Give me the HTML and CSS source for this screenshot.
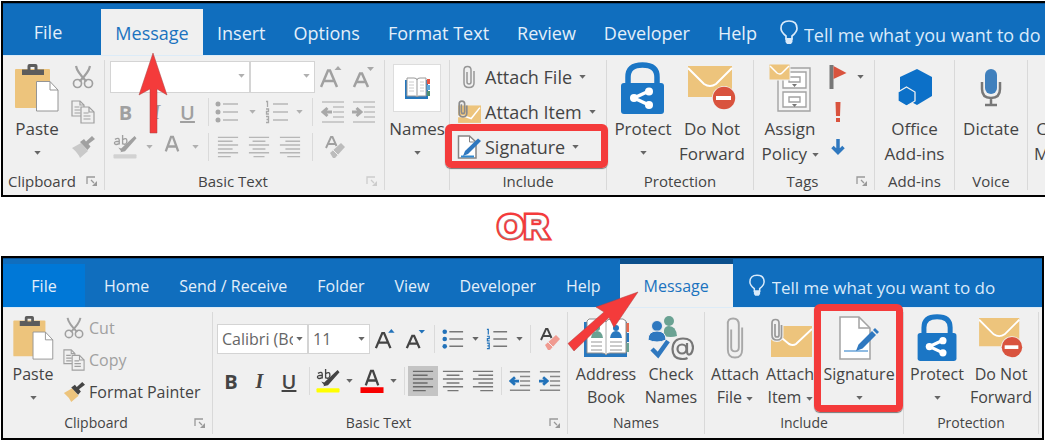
FILE: index.html
```html
<!DOCTYPE html>
<html lang="en">
<head>
<meta charset="utf-8">
<title>Outlook signature ribbons</title>
<link rel="stylesheet" href="styles.css">
</head>
<body>
<svg class="sprite" aria-hidden="true">
  <symbol id="caret" viewBox="0 0 8 5"><path d="M0 0h8L4 4.6z" fill="currentColor"/></symbol>
  <symbol id="launcher" viewBox="0 0 12 11"><path d="M1 8V1h8M5 4l3 3" fill="none" stroke="currentColor" stroke-width="1.3"/><path d="M11 5v5H6z" fill="currentColor"/></symbol>
  <symbol id="paste" viewBox="0 0 44 48">
    <rect y="5" width="35" height="39" rx="1" fill="#edc47c"/>
    <path d="M7 5.500h5.500V2q0-2 2-2h6q2 0 2 2v3.500H29V11H7zM15.500 3v3h4V3z" fill="#5c5c5c" fill-rule="evenodd"/>
    <path d="M21.500 17.500H35l8 8.500v21H21.500z" fill="#fff" stroke="#949494"/><path d="M35 17.500V26h8" fill="none" stroke="#949494"/>
  </symbol>
  <symbol id="cut" viewBox="0 0 22 24"><g fill="none" stroke="currentColor" stroke-width="1.700"><path d="M4 1q1 6 10.500 15.500M18 1q-1 6-10.500 15.500" stroke-width="2.200"/><circle cx="5.500" cy="18.500" r="4"/><circle cx="16.500" cy="18.500" r="4"/></g></symbol>
  <symbol id="copy" viewBox="0 0 24 24"><g fill="#f0f0f0" stroke="currentColor" stroke-width="1.200"><path d="M1 1h8l4 4v11H1z"/><path d="M9 1v4h4M3.500 7h5M3.500 10h6M3.500 13h6" fill="none"/><path d="M10 7h8l5 5v11H10z"/><path d="M18 7v5h5M12.500 13h5M12.500 16h7M12.500 19h7" fill="none"/></g></symbol>
  <symbol id="brush" viewBox="0 0 24 22"><path d="M1 12l9-5 7 8-8 7q-2-5-8-10z" fill="var(--brush)"/><path d="M9 6l4-3 2 2.500L21 0l3 3-6.500 5 2 2.500-3 3.500z" fill="currentColor"/></symbol>
  <symbol id="grow" viewBox="0 0 22 22"><path d="M1 21L8 4.500h2L17 21M4 15h10.500" fill="none" stroke="currentColor" stroke-width="2.500"/><path d="M14.500 4L18 0l3.500 4z" fill="var(--accent)"/></symbol>
  <symbol id="shrink" viewBox="0 0 22 22"><path d="M2 21L8 7.500h2L16 21M4.500 16h9" fill="none" stroke="currentColor" stroke-width="2.500"/><path d="M15 1h7l-3.500 4z" fill="var(--accent)"/></symbol>
  <symbol id="bullets" viewBox="0 0 24 22"><g fill="var(--accent)"><circle cx="3" cy="3" r="2.500"/><circle cx="3" cy="11" r="2.500"/><circle cx="3" cy="19" r="2.500"/></g><path d="M8 3h15M8 11h15M8 19h15" stroke="currentColor" stroke-width="1.600" opacity=".7"/></symbol>
  <symbol id="numbers" viewBox="0 0 24 24"><path d="M1 1.500h1.500V7M1 9h2.500v2.500H1.500V14H4M1 16.500h2.500v6H1M1.500 19.500h2" fill="none" stroke="var(--accent)" stroke-width="1.300"/><path d="M8 4h15M8 12h15M8 20h15" stroke="currentColor" stroke-width="1.600" opacity=".7"/></symbol>
  <symbol id="outdent" viewBox="0 0 24 24"><path d="M1 2h22M12 7h11M12 12h11M12 17h11M1 22h22" stroke="currentColor" stroke-width="1.600" opacity=".6"/><path d="M11 12H3M6.500 8L2 12l4.500 4" fill="none" stroke="var(--accent)" stroke-width="3"/></symbol>
  <symbol id="indent" viewBox="0 0 24 24"><path d="M1 2h22M12 7h11M12 12h11M12 17h11M1 22h22" stroke="currentColor" stroke-width="1.600" opacity=".6"/><path d="M0 12h8M4.500 8L9 12l-4.500 4" fill="none" stroke="var(--accent)" stroke-width="3"/></symbol>
  <symbol id="left" viewBox="0 0 22 24"><path d="M0 1.500h22M0 5.700h16M0 9.900h22M0 14.100h16M0 18.300h22M0 22.500h14" stroke="currentColor" stroke-width="1.600" opacity=".7"/></symbol>
  <symbol id="center" viewBox="0 0 22 24"><path d="M0 1.500h22M4 5.700h14M0 9.900h22M4 14.100h14M0 18.300h22M5 22.500h12" stroke="currentColor" stroke-width="1.600" opacity=".7"/></symbol>
  <symbol id="right" viewBox="0 0 22 24"><path d="M0 1.500h22M6 5.700h16M0 9.900h22M6 14.100h16M0 18.300h22M8 22.500h14" stroke="currentColor" stroke-width="1.600" opacity=".7"/></symbol>
  <symbol id="highlight" viewBox="0 0 24 25"><path d="M1.500 4.500Q6 2 6 5.500V10M6 6.500Q1 6.500 1 8.500 1.500 11 6 9M9.500 0v10M9.500 5Q14 2 14 6.500 13.500 11 9.500 9" fill="none" stroke="currentColor" stroke-width="1.400"/><path d="M22 1l2 2.500L12 17l-5 1 1-1-3-4 3 1z" fill="currentColor"/><rect y="20" width="24" height="4.500" rx="1" fill="var(--marker)"/></symbol>
  <symbol id="fontcolor" viewBox="0 0 24 25"><path d="M5.500 17L11 2h2l5.500 15M8 12h8" fill="none" stroke="currentColor" stroke-width="2.400"/><rect y="19" width="24" height="6" fill="var(--ink)"/></symbol>
  <symbol id="clear" viewBox="0 0 20 22"><path d="M1 12L6 1h1.500l4 9M3 8h7" fill="none" stroke="currentColor" stroke-width="1.900"/><path d="M5 17L16 7l4 4-10 11H8z" fill="var(--eraser)"/><path d="M8 14l5 5" stroke="#f0f0f0"/></symbol>
  <symbol id="book" viewBox="0 0 46 40">
    <path d="M1 4h43v35H1z" fill="#2878bf"/><path d="M43 5h3v9h-3z" fill="#e86a50"/><path d="M43 15h3v9h-3z" fill="#2878bf"/><path d="M43 25h3v9h-3z" fill="#6aa293"/>
    <path d="M4 3l2-2h12q4 0 5 3 1-3 5-3h12l3 2v32H27q-3 0-4 2-1-2-4-2H4z" fill="#fff" stroke="#8d8d8d"/><path d="M23 4v33" stroke="#aaa"/>
    <path d="M8 24h11M8 28h11M8 32h11M27 24h12M27 28h12M27 32h12" stroke="#bbb" stroke-width="1.300"/>
    <circle cx="14" cy="10" r="3" fill="#6aa293"/><path d="M8 20q1-7 6-7t6 7z" fill="#6aa293"/><circle cx="33" cy="10" r="3" fill="#2878bf"/><path d="M27 20q1-7 6-7t6 7z" fill="#2878bf"/>
  </symbol>
  <symbol id="smallbook" viewBox="0 0 26 23">
    <path d="M1 3h23v19H1z" fill="#2477bd"/><path d="M23 2h3v5h-3z" fill="#e65542"/><path d="M23 8h3v5h-3z" fill="#5da8da"/><path d="M23 14h3v5h-3z" fill="#4f8f73"/>
    <path d="M3 1h7q3 0 3 2 0-2 3-2h6v18h-7q-2 0-2 1 0-1-2-1H3z" fill="#fff" stroke="#999"/><path d="M13 3v17" stroke="#999"/><path d="M5 5h5M5 8h5M5 11h5M5 14h5M16 5h4M16 8h4M16 11h4M16 14h4" stroke="#ccc"/>
  </symbol>
  <symbol id="clip" viewBox="0 0 18 44"><path d="M5 13v19q0 4 4 4t4-4V8q0-6.500-6-6.500T1.500 8v26q0 8.500 7.500 8.500t7.500-8.500V11" fill="none" stroke="#a8a8a8" stroke-width="2"/></symbol>
  <symbol id="smallclip" viewBox="0 0 12 24"><path d="M4 7v10q0 2 2 2t2-2V5q0-3.500-3.500-3.500T1 5v13q0 4.500 5 4.500t5-4.500V6" fill="none" stroke="#969696" stroke-width="1.500"/></symbol>
  <symbol id="item" viewBox="0 0 44 40"><path d="M3 8h41v31H3z" fill="#edc47c"/><path d="M3 11l18 15q4 2 7 0l16-15" fill="none" stroke="#fff" stroke-width="2"/><path d="M7 6v11q0 2 2 2t2-2V5q0-3.500-3.500-3.500T4 5v12q0 5 5 5t4.500-5V7" fill="none" stroke="#f0f0f0" stroke-width="4"/><path d="M7 6v11q0 2 2 2t2-2V5q0-3.500-3.500-3.500T4 5v12q0 5 5 5t4.500-5V7" fill="none" stroke="#999" stroke-width="1.700"/></symbol>
  <symbol id="smallitem" viewBox="0 0 22 22"><path d="M1 5h21v16H1z" fill="#edc47c"/><path d="M1 15l6 0 6 2 8-10" fill="none" stroke="#fff" stroke-width="1.400"/><path d="M4 4v7q0 1.500 1.500 1.500T7 11V3.500Q7 1 4.500 1T2 3.500V12q0 3.500 3.500 3.500T9 12V5" fill="none" stroke="#8b8b8b" stroke-width="1.500"/></symbol>
  <symbol id="sign" viewBox="0 0 40 44"><path d="M1 1h19l11 11v31H1z" fill="#fff" stroke="#a3a3a3" stroke-width="1.500"/><path d="M20 1v11h11" fill="none" stroke="#a3a3a3" stroke-width="1.500"/><path d="M5 35h24" stroke="#6aa5d8" stroke-width="1.500"/><path d="M17 35l2.500-6.500L33 15l4 4-13.500 13.500zM34 14l2-2 4 4-2 2z" fill="#2f78bf"/></symbol>
  <symbol id="smallsign" viewBox="0 0 24 24"><path d="M1.500 1h11L19 7v16H1.500z" fill="#fff" stroke="#858585" stroke-width="1.500"/><path d="M12.500 1v6H19" fill="none" stroke="#858585"/><path d="M4 21.500h13" stroke="#2f88cf" stroke-width="2"/><path d="M6 21l2-5L21 3.500l3 2.500-13 13z" fill="#2f78bf"/></symbol>
  <symbol id="lock" viewBox="0 0 44 52"><path d="M7 24V15Q7 3 21.500 3T36 15v9" fill="none" stroke="#1b76c5" stroke-width="5.500"/><rect y="21" width="43" height="31" rx="3" fill="#1b76c5"/><path d="M28 29L13 36l15 7" fill="none" stroke="#fff" stroke-width="3.500"/><circle cx="28" cy="29.500" r="4" fill="#fff"/><circle cx="13" cy="36" r="4" fill="#fff"/><circle cx="28" cy="43" r="4" fill="#fff"/></symbol>
  <symbol id="donot" viewBox="0 0 48 46"><path d="M0 1h44v31H0z" fill="#edc47c"/><path d="M0 3l16 16q6 4 12 0L44 3" fill="none" stroke="#fff" stroke-width="2"/><circle cx="36" cy="33" r="12" fill="#f0f0f0"/><circle cx="36" cy="33" r="11.200" fill="#d9533e"/><rect x="28" y="31" width="15" height="4" fill="#fff"/></symbol>
  <symbol id="cabinet" viewBox="0 0 42 48"><g fill="#fff" stroke="#a3a3a3" stroke-width="1.400"><path d="M9 4h32v43H9z" fill="#f4f4f4"/><path d="M14 8h23v16H14zM14 28h23v15H14z"/><path d="M20 13h11v5H20zM20 33h11v5H20z"/></g><path d="M23 20h5l-2.500 3zM23 40h5l-2.500 3z" fill="#777"/><path d="M0 0h21v16H0z" fill="#edc47c" stroke="#f0f0f0"/><path d="M1 2l7 7q3 2 5 0l7-7" fill="none" stroke="#fff" stroke-width="1.500"/></symbol>
  <symbol id="flag" viewBox="0 0 17 24"><rect width="4" height="24" y="0" fill="#777"/><path d="M4 1l13 7-13 6z" fill="#d9533e"/></symbol>
  <symbol id="bang" viewBox="0 0 6 20"><path d="M.5 0h5L5 14H1zM1 16h4v4H1z" fill="#d9533e"/></symbol>
  <symbol id="down" viewBox="0 0 14 16"><path d="M7 0v13M1.500 8L7 13.500 12.500 8" fill="none" stroke="#2f78bf" stroke-width="3.500"/></symbol>
  <symbol id="addins" viewBox="0 0 34 38"><path d="M19 0l15 8v19l-15 9L2 27V8z" fill="#0c70c8"/><path d="M8.500 18l8.500 5v9l-8.500 5L0 32v-9z" fill="#0c70c8" stroke="#f0f0f0" stroke-width="1.300"/></symbol>
  <symbol id="mic" viewBox="0 0 22 38"><rect x="5" width="12" height="25" rx="6" fill="#4080bd"/><path d="M2 13v7q0 9 9 9t9-9v-7M11 29v6M5 36h12" fill="none" stroke="#777" stroke-width="2.500"/></symbol>
  <symbol id="check" viewBox="0 0 46 44"><g fill="#6aa293"><circle cx="21" cy="5" r="5"/><path d="M16 20v-6q1-4 5-4 7 0 8 10-6 2-13 0z"/></g><g fill="#2f78bf" stroke="#f0f0f0"><circle cx="9" cy="10" r="5.500"/><path d="M0 24q0-9 9-9t9 9q-9 4-18 0z"/></g><path d="M4 33l6 6L20 25" fill="none" stroke="#2f78bf" stroke-width="4.500"/><circle cx="34" cy="33" r="4.500" fill="none" stroke="#777" stroke-width="2.200"/><path d="M39 27v8q0 4 2.500 3.500T45 32q0-9.500-10-9.500T24.500 33q0 10 10 10 3 0 5-1" fill="none" stroke="#777" stroke-width="2.200"/></symbol>
  <symbol id="bulb" viewBox="0 0 18 25"><path d="M6 19v-3Q1 12 1 8.500 1 1 9 1t8 7.500Q17 12 12 16v3z" fill="none" stroke="currentColor" stroke-width="1.700"/><path d="M5.500 18h7v4L11 24H7l-1.500-2z" fill="currentColor"/></symbol>
</svg>

<section class="window window-compose">
  <nav class="tabs">
    <a class="tab tab-file" href="#file">File</a>
    <a class="tab tab-active" href="#message">Message
      <svg class="arrow arrow-up" viewBox="0 0 28 80"><path d="M14 0l14 42-10-6v44h-7V36L0 42z"/></svg></a>
    <a class="tab" href="#insert">Insert</a>
    <a class="tab" href="#options">Options</a>
    <a class="tab" href="#format">Format Text</a>
    <a class="tab" href="#review">Review</a>
    <a class="tab" href="#developer">Developer</a>
    <a class="tab" href="#help">Help</a>
    <label class="tell"><svg class="bulb"><use href="#bulb"/></svg><input type="text" aria-label="Tell me" placeholder="Tell me what you want to do"></label>
  </nav>
  <div class="ribbon">
    <section class="group">
      <div class="body clipboard">
        <button class="big"><span class="pic"><svg class="i-paste"><use href="#paste"/></svg></span>Paste<span class="drop"><svg class="caret"><use href="#caret"/></svg></span></button>
        <div class="stack off">
          <button class="row" aria-label="Cut"><svg class="i-24"><use href="#cut"/></svg></button>
          <button class="row" aria-label="Copy"><svg class="i-24"><use href="#copy"/></svg></button>
          <button class="row" aria-label="Format Painter"><svg class="i-24"><use href="#brush"/></svg></button>
        </div>
      </div>
      <footer class="foot"><span>Clipboard</span><button class="launch" aria-label="Clipboard options"><svg><use href="#launcher"/></svg></button></footer>
    </section>
    <section class="group">
      <div class="body text off">
        <div class="line line-a">
          <span class="combo"><select aria-label="Font"><option></option></select><svg class="caret"><use href="#caret"/></svg></span>
          <span class="combo"><select aria-label="Font size"><option></option></select><svg class="caret"><use href="#caret"/></svg></span>
          <button aria-label="Grow font"><svg class="i-22"><use href="#grow"/></svg></button>
          <button aria-label="Shrink font"><svg class="i-22"><use href="#shrink"/></svg></button>
        </div>
        <div class="line line-b">
          <button class="bold">B</button><button class="ital">I</button><button class="under">U</button><i class="sep"></i>
          <button aria-label="Bullets"><svg class="i-24"><use href="#bullets"/></svg></button><button aria-label="Bullet styles"><svg class="caret"><use href="#caret"/></svg></button>
          <button aria-label="Numbering"><svg class="i-24"><use href="#numbers"/></svg></button><button aria-label="Number styles"><svg class="caret"><use href="#caret"/></svg></button><i class="sep"></i>
          <button aria-label="Outdent"><svg class="i-24"><use href="#outdent"/></svg></button><button aria-label="Indent"><svg class="i-24"><use href="#indent"/></svg></button>
        </div>
        <div class="line line-c">
          <button aria-label="Highlight"><svg class="i-24"><use href="#highlight"/></svg></button><button aria-label="Highlight colors"><svg class="caret"><use href="#caret"/></svg></button>
          <button aria-label="Font color"><svg class="i-24"><use href="#fontcolor"/></svg></button><button aria-label="Font colors"><svg class="caret"><use href="#caret"/></svg></button><i class="sep"></i>
          <button aria-label="Align left"><svg class="i-22"><use href="#left"/></svg></button><button aria-label="Center"><svg class="i-22"><use href="#center"/></svg></button><button aria-label="Align right"><svg class="i-22"><use href="#right"/></svg></button><i class="sep"></i>
          <button aria-label="Clear formatting"><svg class="i-22"><use href="#clear"/></svg></button>
        </div>
      </div>
      <footer class="foot"><span>Basic Text</span><button class="launch faint" aria-label="Text options"><svg><use href="#launcher"/></svg></button></footer>
    </section>
    <section class="group">
      <div class="body"><button class="big"><span class="pic"><span class="tile"><svg class="i-book"><use href="#smallbook"/></svg></span></span>Names<span class="drop"><svg class="caret"><use href="#caret"/></svg></span></button></div>
    </section>
    <section class="group">
      <div class="body"><div class="stack include">
        <button class="row"><svg class="i-24"><use href="#smallclip"/></svg>Attach File<svg class="caret"><use href="#caret"/></svg></button>
        <button class="row"><svg class="i-24"><use href="#smallitem"/></svg>Attach Item<svg class="caret"><use href="#caret"/></svg></button>
        <button class="row marked"><svg class="i-24"><use href="#smallsign"/></svg>Signature<svg class="caret"><use href="#caret"/></svg><span class="mark"></span></button>
      </div></div>
      <footer class="foot"><span>Include</span></footer>
    </section>
    <section class="group">
      <div class="body pair">
        <button class="big"><span class="pic"><svg class="i-lock"><use href="#lock"/></svg></span>Protect<span class="drop"><svg class="caret"><use href="#caret"/></svg></span></button>
        <button class="big"><span class="pic"><svg class="i-donot"><use href="#donot"/></svg></span>Do Not<br>Forward</button>
      </div>
      <footer class="foot"><span>Protection</span></footer>
    </section>
    <section class="group">
      <div class="body tags">
        <button class="big"><span class="pic"><svg class="i-cabinet"><use href="#cabinet"/></svg></span>Assign<span>Policy <svg class="caret"><use href="#caret"/></svg></span></button>
        <div class="stack">
          <button class="row" aria-label="Follow up"><svg class="i-24"><use href="#flag"/></svg><svg class="caret"><use href="#caret"/></svg></button>
          <button class="row" aria-label="High importance"><svg class="i-20"><use href="#bang"/></svg></button>
          <button class="row" aria-label="Low importance"><svg class="i-16"><use href="#down"/></svg></button>
        </div>
      </div>
      <footer class="foot"><span>Tags</span><button class="launch" aria-label="Tag options"><svg><use href="#launcher"/></svg></button></footer>
    </section>
    <section class="group">
      <div class="body"><button class="big"><span class="pic"><svg class="i-addins"><use href="#addins"/></svg></span>Office<br>Add-ins</button></div>
      <footer class="foot"><span>Add-ins</span></footer>
    </section>
    <section class="group">
      <div class="body"><button class="big"><span class="pic"><svg class="i-mic"><use href="#mic"/></svg></span>Dictate</button></div>
      <footer class="foot"><span>Voice</span></footer>
    </section>
    <section class="group cut-off">
      <div class="body"><button class="big"><span class="pic"></span>C<br>M</button></div>
    </section>
  </div>
</section>

<p class="or">OR</p>

<section class="window window-main">
  <nav class="tabs">
    <a class="tab tab-file" href="#file2">File</a>
    <a class="tab" href="#home">Home</a>
    <a class="tab" href="#send">Send / Receive</a>
    <a class="tab" href="#folder">Folder</a>
    <a class="tab" href="#view">View</a>
    <a class="tab" href="#developer2">Developer</a>
    <a class="tab" href="#help2">Help</a>
    <a class="tab tab-active" href="#message2">Message
      <svg class="arrow arrow-side" viewBox="0 0 72 61"><path d="M70 0L46 35.500l-5-10L6 59l-6-7.500L36 20l-8-5z"/></svg></a>
    <label class="tell"><svg class="bulb"><use href="#bulb"/></svg><input type="text" aria-label="Tell me" placeholder="Tell me what you want to do"></label>
  </nav>
  <div class="ribbon">
    <section class="group">
      <div class="body clipboard">
        <button class="big"><span class="pic"><svg class="i-paste"><use href="#paste"/></svg></span>Paste<span class="drop"><svg class="caret"><use href="#caret"/></svg></span></button>
        <div class="stack">
          <button class="row off"><svg class="i-22"><use href="#cut"/></svg>Cut</button>
          <button class="row off"><svg class="i-22"><use href="#copy"/></svg>Copy</button>
          <button class="row"><svg class="i-22"><use href="#brush"/></svg>Format Painter</button>
        </div>
      </div>
      <footer class="foot"><span>Clipboard</span><button class="launch" aria-label="Clipboard options"><svg><use href="#launcher"/></svg></button></footer>
    </section>
    <section class="group">
      <div class="body text">
        <div class="line line-d">
          <span class="combo"><select aria-label="Font"><option>Calibri (Body)</option></select><svg class="caret"><use href="#caret"/></svg></span>
          <span class="combo"><select aria-label="Font size"><option>11</option></select><svg class="caret"><use href="#caret"/></svg></span>
          <button aria-label="Grow font"><svg class="i-20"><use href="#grow"/></svg></button>
          <button aria-label="Shrink font"><svg class="i-20"><use href="#shrink"/></svg></button><i class="sep"></i>
          <button aria-label="Bullets"><svg class="i-22"><use href="#bullets"/></svg></button><button aria-label="Bullet styles"><svg class="caret"><use href="#caret"/></svg></button>
          <button aria-label="Numbering"><svg class="i-22"><use href="#numbers"/></svg></button><button aria-label="Number styles"><svg class="caret"><use href="#caret"/></svg></button><i class="sep"></i>
          <button aria-label="Clear formatting"><svg class="i-22"><use href="#clear"/></svg></button>
        </div>
        <div class="line line-e">
          <button class="bold">B</button><button class="ital">I</button><button class="under">U</button><i class="sep"></i>
          <button aria-label="Highlight"><svg class="i-24"><use href="#highlight"/></svg></button><button aria-label="Highlight colors"><svg class="caret"><use href="#caret"/></svg></button>
          <button aria-label="Font color"><svg class="i-24"><use href="#fontcolor"/></svg></button><button aria-label="Font colors"><svg class="caret"><use href="#caret"/></svg></button><i class="sep"></i>
          <button class="pressed" aria-label="Align left"><svg class="i-22"><use href="#left"/></svg></button><button aria-label="Center"><svg class="i-22"><use href="#center"/></svg></button><button aria-label="Align right"><svg class="i-22"><use href="#right"/></svg></button><i class="sep"></i>
          <button aria-label="Outdent"><svg class="i-22"><use href="#outdent"/></svg></button><button aria-label="Indent"><svg class="i-22"><use href="#indent"/></svg></button>
        </div>
      </div>
      <footer class="foot"><span>Basic Text</span><button class="launch" aria-label="Text options"><svg><use href="#launcher"/></svg></button></footer>
    </section>
    <section class="group">
      <div class="body names">
        <button class="big"><span class="pic"><svg class="i-address"><use href="#book"/></svg></span>Address<br>Book</button>
        <button class="big"><span class="pic"><svg class="i-check"><use href="#check"/></svg></span>Check<br>Names</button>
      </div>
      <footer class="foot"><span>Names</span></footer>
    </section>
    <section class="group">
      <div class="body trio">
        <button class="big"><span class="pic"><svg class="i-clip"><use href="#clip"/></svg></span>Attach<span>File <svg class="caret"><use href="#caret"/></svg></span></button>
        <button class="big"><span class="pic"><svg class="i-item"><use href="#item"/></svg></span>Attach<span>Item <svg class="caret"><use href="#caret"/></svg></span></button>
        <button class="big marked"><span class="pic"><svg class="i-sign"><use href="#sign"/></svg></span>Signature<span class="drop"><svg class="caret"><use href="#caret"/></svg></span><span class="mark"></span></button>
      </div>
      <footer class="foot"><span>Include</span></footer>
    </section>
    <section class="group">
      <div class="body pair">
        <button class="big"><span class="pic"><svg class="i-lock"><use href="#lock"/></svg></span>Protect<span class="drop"><svg class="caret"><use href="#caret"/></svg></span></button>
        <button class="big"><span class="pic"><svg class="i-donot"><use href="#donot"/></svg></span>Do Not<br>Forward</button>
      </div>
      <footer class="foot"><span>Protection</span></footer>
    </section>
  </div>
</section>
</body>
</html>
```
FILE: styles.css
```css
* { box-sizing: border-box; }
body {
  margin: 0;
  padding: 1px 0 0 1px;
  background: #fff;
  color: #444;
  font-family: "Open Sans", "Noto Sans", sans-serif;
  font-weight: 500;
  overflow-x: hidden;
}
.sprite { position: absolute; width: 0; height: 0; }
button {
  margin: 0;
  padding: 0;
  border: 0;
  background: none;
  color: inherit;
  font: inherit;
}
svg { flex: none; }

.window {
  --accent: #2272b9;
  --brush: #edc47c;
  --marker: #ffff00;
  --ink: #f80000;
  --eraser: #f09a90;
  border: 2px solid #000;
}
.window-compose { border-right: 0; overflow: hidden; }
.window-main { margin-right: 1px; }
.off {
  --accent: #a8a8a8;
  --brush: #c9c9c9;
  --marker: #d2d2d2;
  --ink: transparent;
  --eraser: #bcbcbc;
  color: #a0a0a0;
}

/* Tab strip */
.tabs { display: flex; background: #106ebe; border-top: 1px solid #0b5293; }
.tab {
  display: flex;
  align-items: center;
  justify-content: center;
  position: relative;
  color: #e3effa;
  text-decoration: none;
  white-space: nowrap;
}
.tab-active { background: #f0f0f0; color: #1b73bf; }
.tell { display: flex; align-items: center; flex: 1; min-width: 0; color: #d9eafa; }
.tell input {
  flex: 1;
  min-width: 0;
  padding: 0;
  border: 0;
  background: none;
  color: inherit;
  font: inherit;
}
.tell input::placeholder { color: #d9eafa; opacity: 1; }
.bulb { width: 18px; height: 25px; margin-bottom: 4px; }

.window-compose .tabs { height: 52px; font-size: 18px; }
.window-compose .tab { padding: 6px 14px 0; }
.window-compose .tab-file { width: 98px; padding: 4px 22px 0 14px; }
.window-compose .tab-active { width: 102px; margin-top: 5px; padding-top: 1px; }
.window-compose .tell { gap: 6px; padding: 10px 0 0 9px; }

.window-main .tabs { height: 49px; font-size: 16px; }
.window-main .tab { padding: 6px 15px 0; }
.window-main .tab-file { width: 82px; margin-top: 5px; margin-right: 4px; padding-top: 0; background: #0078d7; }
.window-main .tab-active { width: 113px; border-top: 5px solid #0b4f8c; padding-top: 1px; margin-left: 4px; }
.window-main .tell { gap: 7px; padding: 8px 0 0 16px; font-size: 17px; }
.window-main .bulb { width: 16px; height: 23px; }

/* Ribbon */
.ribbon { display: grid; background: #f0f0f0; border-top: 1px solid #dcebf7; }
.window-compose .ribbon {
  grid-template-columns: 102fr 280fr 65fr 157fr 147fr 121fr 80fr 73fr 17fr;
  min-height: 140px;
  font-size: 17px;
  line-height: 25px;
}
.window-main .ribbon {
  grid-template-columns: 210fr 355fr 137fr 199fr 135fr;
  min-height: 131px;
  padding-right: 3px;
  font-size: 16px;
  line-height: 23px;
}
.group {
  display: flex;
  flex-direction: column;
  min-width: 0;
  margin: 4px 0;
  border-right: 1px solid #d9d9d9;
}
.window-compose .group { margin-bottom: 5px; }
.group.cut-off { border-right: 0; overflow: hidden; }
.body { flex: 1; }
.foot { display: flex; align-items: center; line-height: 18px; font-size: 15px; }
.foot span { flex: 1; text-align: center; white-space: nowrap; }
.window-main .foot { line-height: 22px; font-size: 14px; }
.launch { display: flex; justify-content: flex-end; width: 23px; padding-right: 6px; color: #999; }
.launch svg { width: 12px; height: 11px; }
.faint { color: #ccc; }

.big {
  display: flex;
  flex-direction: column;
  align-items: center;
  width: 100%;
  white-space: nowrap;
}
.pic { display: flex; align-items: center; justify-content: center; height: 56px; }
.window-main .pic { height: 51px; }
.caret { width: 7px; height: 4px; vertical-align: middle; color: #666; }
.drop { display: flex; align-items: center; height: 23px; }
.cut-off .big { align-items: flex-start; padding-left: 6px; }
.tile {
  display: flex;
  align-items: center;
  justify-content: center;
  width: 48px;
  height: 48px;
  border: 1px solid #ddd;
  background: #fff;
}

.clipboard { display: grid; grid-template-columns: 68px 1fr; }
.window-main .clipboard { grid-template-columns: 60px 1fr; }
.stack { display: grid; grid-auto-rows: 34px; row-gap: 1px; align-content: start; }
.window-main .stack { grid-auto-rows: 32px; row-gap: 0; }
.row { display: flex; align-items: center; gap: 4px; white-space: nowrap; }
.include { padding-left: 7px; font-size: 18px; }
.include .caret { margin-left: 3px; }
.pair { display: grid; grid-template-columns: 72px 66px; }
.window-main .pair { grid-template-columns: 66px 62px; }
.names { display: grid; grid-template-columns: 76px 54px; }
.trio { display: grid; grid-template-columns: 60px 50px 1fr; }
.tags { display: grid; grid-template-columns: 72px 1fr; }
.tags .stack { justify-items: start; }
.tags .row { gap: 7px; min-width: 24px; justify-content: center; }

/* Formatting controls */
.text { display: grid; align-content: start; row-gap: 1px; padding-left: 5px; }
.window-main .text { padding: 12px 0 0 4px; row-gap: 12px; }
.line { display: grid; height: 34px; align-items: center; }
.window-main .line { height: 30px; }
.line button { display: flex; align-items: center; justify-content: center; height: 30px; }
.line-a { grid-template-columns: 140px 65px 32px 32px; }
.line-b { grid-template-columns: 31px 31px 31px 10px 28px 22px 28px 16px 10px 31px 31px; }
.line-c { grid-template-columns: 30px 18px 28px 18px 8px 31px 31px 31px 14px 31px; }
.line-d { grid-template-columns: 91px 62px 30px 30px 8px 30px 15px 28px 16px 7px 32px; }
.line-e { grid-template-columns: 28px 29px 30px 10px 28px 15px 29px 15px 7px 30px 30px 30px 6px 31px 30px; }
.combo { position: relative; display: flex; height: 32px; }
.window-main .combo { height: 30px; }
.combo select {
  width: 100%;
  padding: 0 14px 0 4px;
  border: 1px solid #d4d4d4;
  border-radius: 0;
  background: #fff;
  color: #666;
  font: inherit;
  appearance: none;
}
.combo .caret { position: absolute; right: 5px; top: 13px; pointer-events: none; }
.sep { justify-self: center; width: 1px; height: 28px; background: #dadada; }
.line .bold, .line .ital, .line .under { font-size: 20px; font-weight: 700; }
.line .ital { font-family: "Liberation Serif", serif; font-style: italic; }
.line .under { font-weight: 600; text-decoration: underline; }
.line .pressed { background: #c4c4c4; }
.off .caret { color: #b0b0b0; }

/* Icon sizes */
.i-16 { width: 24px; height: 16px; }
.i-20 { width: 24px; height: 20px; }
.i-22 { width: 22px; height: 22px; }
.i-24 { width: 24px; height: 24px; }
.i-paste { width: 44px; height: 48px; }
.i-book { width: 26px; height: 23px; }
.i-lock { width: 44px; height: 52px; }
.i-donot { width: 48px; height: 46px; }
.i-cabinet { width: 42px; height: 48px; }
.i-addins { width: 34px; height: 38px; }
.i-mic { width: 22px; height: 38px; }
.i-address { width: 46px; height: 40px; }
.i-check { width: 46px; height: 44px; }
.i-clip { width: 18px; height: 42px; }
.i-item { width: 44px; height: 40px; }
.i-sign { width: 40px; height: 44px; }
.window-main .i-paste { width: 41px; height: 44px; }
.window-main .i-lock { width: 41px; height: 47px; }
.window-main .i-donot { width: 44px; height: 42px; }

/* Annotations */
.arrow { position: absolute; z-index: 2; fill: #f43b3b; stroke: #a44; stroke-width: .5px; overflow: visible; }
.arrow-up { width: 28px; height: 80px; left: 38px; top: 44px; }
.arrow-side { width: 72px; height: 61px; left: -52px; top: 28px; }
.marked { position: relative; }
.mark {
  position: absolute;
  inset: -6px -2px -4px -12px;
  border: 7px solid #f43b3b;
  border-radius: 6px;
  box-shadow: 0 1px 1px #777;
}
.window-main .mark { inset: -8px 0 0 -1px; }
.or {
  margin: 0;
  height: 59px;
  color: #fff;
  font: bold 34px/59px "Liberation Sans", sans-serif;
  text-align: center;
  -webkit-text-stroke: 5px #f43b3b;
  paint-order: stroke fill;
  text-shadow: 0 1px 1px #999;
}
```
